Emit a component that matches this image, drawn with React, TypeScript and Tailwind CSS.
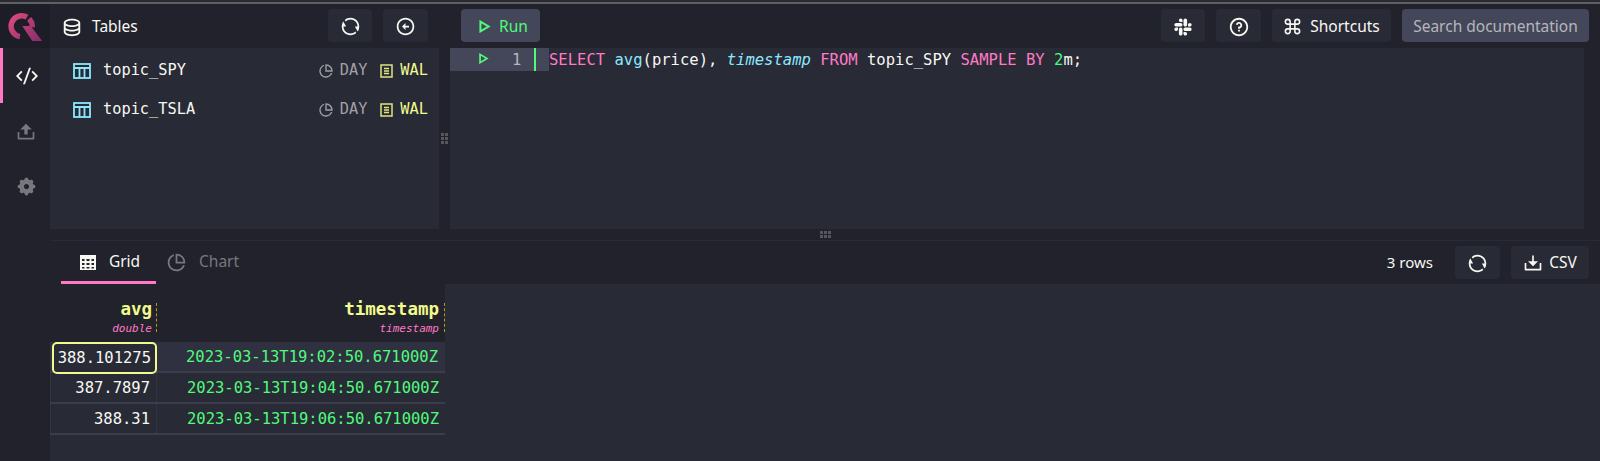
import {
  RiArrowLeftCircleLine,
  RiCodeSSlashLine,
  RiDatabase2Line,
  RiDownload2Line,
  RiPieChartLine,
  RiQuestionLine,
  RiRefreshLine,
  RiSettings5Fill,
  RiSlackFill,
  RiUpload2Fill,
} from 'react-icons/ri'
import { Command } from 'lucide-react'

const mono = 'font-["DejaVu_Sans_Mono",monospace]'

const Logo = () => (
  <svg width="35" height="30" viewBox="0 0 35 30" fill="none">
    <defs>
      <linearGradient id="logo" gradientUnits="userSpaceOnUse" x1="3" y1="3" x2="33" y2="30">
        <stop offset="0" stopColor="#dc4a7c" />
        <stop offset="1" stopColor="#852c6d" />
      </linearGradient>
    </defs>
    <path d="M19 6.200A10.500 10.500 0 1 0 12 25.600" stroke="url(#logo)" strokeWidth="5.500" />
    <path d="M21.100 7.900A10.500 10.500 0 0 1 24.200 16.200" stroke="url(#logo)" strokeWidth="5.500" />
    <path d="M14.300 15H22.700L34.300 30H24.300Z" fill="url(#logo)" />
  </svg>
)

const PlayIcon = ({ size }: { size: number }) => (
  <svg width={size} height={size} viewBox="0 0 16 16" fill="none" stroke="#50fa7b" strokeWidth="2.500">
    <path d="M3 2L13 8L3 14Z" />
  </svg>
)

const TableIcon = () => (
  <svg width="18" height="16" viewBox="0 0 18 16" fill="none" stroke="#8be9fd" strokeWidth="1.800">
    <rect x="1" y="1" width="16" height="14" />
    <path d="M1 5H17M6.500 5V15M11.500 5V15" />
  </svg>
)

const WalIcon = () => (
  <svg width="13" height="14" viewBox="0 0 13 14" fill="none" stroke="#dfe47f" strokeWidth="1.500">
    <rect x="1" y="1" width="11" height="12" />
    <path d="M4 4.500H9M4 7H9M4 9.500H9" />
  </svg>
)

const GridIcon = () => (
  <svg width="16" height="15" viewBox="0 0 16 15" fill="#f8f8f2">
    <path d="M0 0H16V15H0ZM2 4V6H4.500V4ZM6.500 4V6H9.500V4ZM11.500 4V6H14V4ZM2 8V10H4.500V8ZM6.500 8V10H9.500V8ZM11.500 8V10H14V8ZM2 12V13.500H4.500V12ZM6.500 12V13.500H9.500V12ZM11.500 12V13.500H14V12Z" fillRule="evenodd" />
  </svg>
)

const HeadButton = ({ children, className }: { children: React.ReactNode; className: string }) => (
  <div className={`mb-px flex h-[33px] items-center justify-center rounded-[4px] bg-[#282a36] pt-[2px] ${className}`}>
    {children}
  </div>
)

const TableRow = ({ name }: { name: string }) => (
  <div className="flex h-[39px] items-center pl-[23px] pr-[11px]">
    <TableIcon />
    <span className={`ml-[12px] text-[15.3px] text-[#f8f8f2] ${mono}`}>{name}</span>
    <div className={`ml-auto flex items-center text-[15.3px] ${mono}`}>
      <RiPieChartLine className="mr-1.5 text-[#a0a1a7]" size={16} />
      <span className="text-[#a0a1a7]">DAY</span>
      <span className="ml-[13px] mr-[7px]">
        <WalIcon />
      </span>
      <span className="text-[#f1fa8c]">WAL</span>
    </div>
  </div>
)

const ResultRow = ({ avg, time, active }: { avg: string; time: string; active?: boolean }) => (
  <div className={`flex h-[31px] border-b-2 border-[#3b3d4a] text-[15.5px] ${mono} ${active ? 'bg-[#2f3140]' : ''}`}>
    <div
      className={`flex items-center justify-end pr-1.5 pt-[2px] text-[#f8f8f2] ${
        active
          ? 'ml-[2px] mr-[-1px] h-[32px] w-[105px] rounded-[5px] border-2 border-[#f1fa8c] bg-[#282a36] pr-[4px]'
          : 'w-[107px] border-x border-dotted border-[#3b3d4a]'
      }`}
    >
      {avg}
    </div>
    <div className="flex w-[288px] items-center justify-end pr-[6px] pt-[2px] text-[#50fa7b]">{time}</div>
  </div>
)

const App = () => {
  return (
    <div className='flex h-[461px] w-[1600px] flex-col overflow-hidden bg-[#21222c] font-["Noto_Sans",sans-serif]'>
      <div className="h-[4px] border-b-2 border-[#5f6066] bg-[#2a2b30]" />
      <div className="flex h-[44px] items-center bg-[#21222c]">
        <div className="flex h-full w-[50px] items-center justify-center bg-[#1c1d26] pb-[1px]">
          <Logo />
        </div>
        <div className="flex w-[389px] items-center pl-[11px] text-[#f8f8f2]">
          <RiDatabase2Line className="mt-[1px]" size={22} />
          <span className="ml-[9px] mt-[2px] text-[15.5px]">Tables</span>
          <HeadButton className="ml-auto w-[44px]">
            <RiRefreshLine size={21} />
          </HeadButton>
          <HeadButton className="ml-[11px] mr-[11px] w-[45px]">
            <RiArrowLeftCircleLine size={21} />
          </HeadButton>
        </div>
        <HeadButton className="ml-[22px] w-[79px] !justify-start !bg-[#44475a] pl-[17px]">
          <PlayIcon size={13} />
          <span className="ml-[8px] text-[15.5px] text-[#50fa7b]">Run</span>
        </HeadButton>
        <div className="ml-auto flex items-center pr-[11px] text-[#f8f8f2]">
          <HeadButton className="w-[44px]">
            <RiSlackFill size={22} />
          </HeadButton>
          <HeadButton className="ml-[11px] w-[45px]">
            <RiQuestionLine size={22} />
          </HeadButton>
          <HeadButton className="ml-[11px] w-[119px]">
            <Command size={19} />
            <span className="ml-2 text-[15.5px]">Shortcuts</span>
          </HeadButton>
          <HeadButton className="ml-[11px] w-[187px] !bg-[#44475a]">
            <span className="text-[15.5px] text-[#b5b6bc]">Search documentation</span>
          </HeadButton>
        </div>
      </div>

      <div className="flex min-h-0 flex-1">
        <div className="w-[50px] shrink-0 bg-[#21222c]">
          <div className="flex h-[55px] items-center justify-center border-l-[3px] border-[#ff79c6] text-[#f8f8f2]">
            <RiCodeSSlashLine size={22} />
          </div>
          <div className="flex h-[57px] items-center justify-center pl-[2px] text-[#77787f]">
            <RiUpload2Fill size={20} />
          </div>
          <div className="flex h-[53px] items-center justify-center pl-[3px] text-[#77787f]">
            <RiSettings5Fill size={21} />
          </div>
        </div>

        <div className="flex min-w-0 flex-1 flex-col">
          <div className="flex h-[181px]">
            <div className="w-[389px] bg-[#282a36] pt-[3px]">
              <TableRow name="topic_SPY" />
              <TableRow name="topic_TSLA" />
            </div>
            <div className="flex w-[11px] items-center justify-center bg-[#21222c]">
              <div className="grid grid-cols-2 gap-px">
                {[0, 1, 2, 3, 4, 5].map(i => (
                  <span key={i} className="h-[3px] w-[3px] bg-[#55565e]" />
                ))}
              </div>
            </div>
            <div className="flex-1 bg-[#282a36]">
              <div className="flex h-[23px] items-center">
                <div className="flex h-full w-[99px] items-center bg-[#44475a]">
                  <div className="mb-[3px] ml-[28px]">
                    <PlayIcon size={11} />
                  </div>
                  <span className={`ml-[23px] pt-[2px] text-[15.5px] text-[#b5b6bc] ${mono}`}>1</span>
                  <span className="ml-[13px] h-full w-[2px] bg-[#50fa7b]" />
                </div>
                <code className={`whitespace-pre pt-[2px] text-[15.54px] text-[#f8f8f2] ${mono}`}>
                  <span className="text-[#ff79c6]">SELECT</span> <span className="text-[#8be9fd]">avg</span>(price),{' '}
                  <span className="italic text-[#8be9fd]">timestamp</span> <span className="text-[#ff79c6]">FROM</span>{' '}
                  topic_SPY <span className="text-[#ff79c6]">SAMPLE BY</span>{' '}
                  <span className="text-[#50fa7b]">2</span>m;
                </code>
              </div>
            </div>
            <div className="w-[16px] bg-[#21222c]" />
          </div>

          <div className="flex h-[11px] items-start justify-center bg-[#21222c] pt-[2px]">
            <div className="grid grid-cols-3 gap-px">
              {[0, 1, 2, 3, 4, 5].map(i => (
                <span key={i} className="h-[3px] w-[3px] bg-[#55565e]" />
              ))}
            </div>
          </div>

          <div className="flex h-[44px] items-center border-t border-[#282a36] bg-[#21222c]">
            <div className="ml-[11px] flex h-full w-[95px] items-center justify-center border-b-[3px] border-[#ff79c6] pt-[2px] text-[#f8f8f2]">
              <span className="ml-[3px]">
                <GridIcon />
              </span>
              <span className="ml-[13px] text-[15.5px]">Grid</span>
            </div>
            <div className="ml-[10px] flex items-center pb-[1px] text-[#77787f]">
              <RiPieChartLine size={21} />
              <span className="ml-[12px] text-[15.5px]">Chart</span>
            </div>
            <div className="ml-auto flex items-center pr-[11px] text-[#f8f8f2]">
              <span className="text-[15px]">3 rows</span>
              <HeadButton className="ml-[22px] w-[45px]">
                <RiRefreshLine size={21} />
              </HeadButton>
              <HeadButton className="ml-[11px] w-[78px]">
                <RiDownload2Line size={20} />
                <span className="ml-1.5 text-[15.5px]">CSV</span>
              </HeadButton>
            </div>
          </div>

          <div className="flex-1 bg-[#282a36]">
            <div className={`w-[395px] ${mono}`}>
              <div className="flex h-[58px] bg-[#21222c]">
                <div className="flex w-[107px] items-center justify-end gap-[4px] pt-[8px]">
                  <div className="flex flex-col items-end">
                    <span className="text-[17.5px] leading-[24px] font-bold text-[#f1fa8c]">avg</span>
                    <span className="text-[11px] leading-[16px] italic text-[#ff79c6]">double</span>
                  </div>
                  <span className="h-[29px] border-r border-dashed border-[#b59b1c]" />
                </div>
                <div className="flex w-[288px] items-center justify-end gap-[5px] pt-[8px]">
                  <div className="flex flex-col items-end">
                    <span className="text-[17.5px] leading-[24px] font-bold text-[#f1fa8c]">timestamp</span>
                    <span className="text-[11px] leading-[16px] italic text-[#ff79c6]">timestamp</span>
                  </div>
                  <span className="h-[29px] border-r border-dashed border-[#b59b1c]" />
                </div>
              </div>
              <ResultRow avg="388.101275" time="2023-03-13T19:02:50.671000Z" active />
              <ResultRow avg="387.7897" time="2023-03-13T19:04:50.671000Z" />
              <ResultRow avg="388.31" time="2023-03-13T19:06:50.671000Z" />
            </div>
          </div>
        </div>
      </div>
    </div>
  )
}

export default App
